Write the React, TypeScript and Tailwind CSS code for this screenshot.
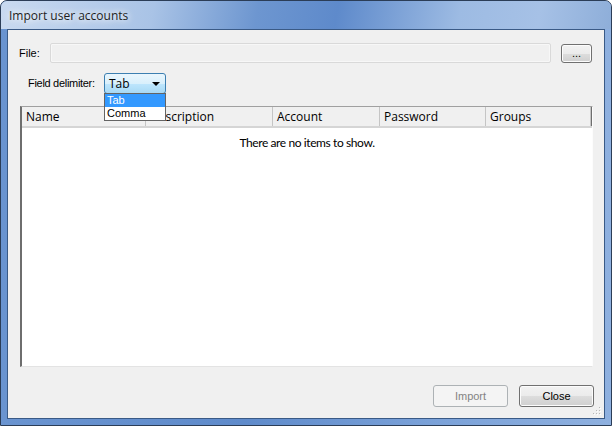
import React from 'react';

const tahoma = { fontFamily: '"Liberation Sans", Arial, sans-serif' };
const segoe = { fontFamily: '"Open Sans", "Noto Sans", sans-serif' };
const segoeNarrow = { fontFamily: 'Lato, "Open Sans", sans-serif' };

const columns = [
  { label: 'Name', width: 'w-[124px]' },
  { label: 'Description', width: 'w-[127px]' },
  { label: 'Account', width: 'w-[107px]' },
  { label: 'Password', width: 'w-[106px]' },
  { label: 'Groups', width: 'flex-1' },
];

function Win7Button({ label, disabled, className }: { label: string; disabled?: boolean; className: string }) {
  return (
    <button
      disabled={disabled}
      style={tahoma}
      className={`${className} flex items-center justify-center rounded-[3px] border text-[11px] ${
        disabled
          ? 'border-[#adb2b5] bg-[#f4f4f4] text-[#838383]'
          : 'border-[#707070] bg-[linear-gradient(#f2f2f2_0%,#ebebeb_50%,#dddddd_51%,#cfcfcf_100%)] text-black shadow-[inset_0_0_0_1px_#fcfcfc]'
      }`}
    >
      {label}
    </button>
  );
}

export default function App() {
  return (
    <div className="relative flex h-[426px] w-[612px] flex-col overflow-hidden rounded-t-[7px] border border-[#2b3d57] bg-[linear-gradient(90deg,#6a94d0_0%,#5f8bcb_40%,#7aa1d8_70%,#8eb0df_100%)] px-[6px] pb-[6px]">
      {/* Title bar */}
      <div className="relative -mx-[6px] flex h-[28px] items-center bg-[linear-gradient(100deg,#c9daf0_0%,#a9c3e6_25%,#6d96d0_42%,#5e8acb_55%,#9dbbe3_75%,#a6c1e6_88%,#8eaed9_100%)] px-[8px]">
        <span
          style={segoe}
          className="pt-[1px] text-[12px] text-[#1e1e1e] [text-shadow:0_0_6px_#ffffff,0_0_10px_#ffffff]"
        >
          Import user accounts
        </span>
      </div>

      {/* Client area */}
      <div className="relative flex flex-1 flex-col border border-[#3a5a86] bg-[#f0f0f0]">
        {/* File row */}
        <div className="mt-[13px] flex items-center pl-[11px]">
          <span style={tahoma} className="w-[31px] text-[11px] text-black">
            File:
          </span>
          <div className="h-[20px] w-[501px] rounded-[2px] border border-[#d9d9d9] bg-[#f0f0f0] shadow-[inset_0_0_0_1px_#f7f7f7]" />
          <Win7Button label="..." className="ml-[10px] h-[19px] w-[31px] leading-[10px]" />
        </div>

        {/* Delimiter row */}
        <div className="mt-[10px] flex items-center pl-[20px]">
          <span style={tahoma} className="w-[76px] text-[11px] tracking-[-0.3px] text-black">
            Field delimiter:
          </span>
          <div className="relative">
            <div className="flex h-[21px] w-[62px] items-center justify-between rounded-[3px] border border-[#3c7fb1] bg-[linear-gradient(#eaf6fd_0%,#d9f0fc_50%,#bee6fd_51%,#a7d9f5_100%)] pl-[4px] pr-[5px]">
              <span style={segoe} className="text-[12px] text-black">
                Tab
              </span>
              <svg width="8" height="4" viewBox="0 0 8 4">
                <path d="M0 0 H8 L4 4 Z" fill="#000" />
              </svg>
            </div>
            {/* Open dropdown list */}
            <div
              style={tahoma}
              className="absolute left-0 top-[20px] z-10 flex w-[62px] flex-col border border-[#646464] bg-white text-[11px]"
            >
              <div className="h-[13px] bg-[#3399ff] pl-[2px] leading-[13px] text-white">Tab</div>
              <div className="h-[13px] pl-[2px] leading-[13px] text-black">Comma</div>
            </div>
          </div>
        </div>

        {/* List view */}
        <div className="ml-[12px] mt-[12px] flex h-[261px] w-[573px] flex-col border-b border-l-2 border-r border-t border-b-[#e3e3e3] border-l-[#6e6e6e] border-r-[#fcfcfc] border-t-[#a0a0a0] bg-white">
          <div className="flex h-[21px] border-b-2 border-[#d5d5d5] bg-[#f0f0f0]">
            {columns.map((c) => (
              <div
                key={c.label}
                style={segoe}
                className={`${c.width} flex items-center border-r border-[#c5c5c5] pl-[4px] text-[12px] text-black`}
              >
                {c.label}
              </div>
            ))}
            <div className="w-[1px] bg-[#6e6e6e]" />
          </div>
          <div style={segoeNarrow} className="mt-[6px] text-center text-[12px] tracking-[-0.4px] text-black">
            There are no items to show.
          </div>
        </div>

        {/* Buttons */}
        <div className="mt-[18px] flex justify-end gap-[11px] pr-[10px]">
          <Win7Button label="Import" disabled className="h-[22px] w-[75px]" />
          <Win7Button label="Close" className="h-[22px] w-[75px]" />
        </div>

        {/* Size grip */}
        <svg className="absolute bottom-[2px] right-[2px]" width="10" height="10" viewBox="0 0 10 10">
          {[
            [8, 2],
            [8, 5],
            [5, 5],
            [8, 8],
            [5, 8],
            [2, 8],
          ].map(([x, y]) => (
            <g key={`${x}-${y}`}>
              <rect x={x} y={y} width="1" height="1" fill="#fff" />
              <rect x={x - 1} y={y - 1} width="1" height="1" fill="#b8b8b8" />
            </g>
          ))}
        </svg>
      </div>
    </div>
  );
}
